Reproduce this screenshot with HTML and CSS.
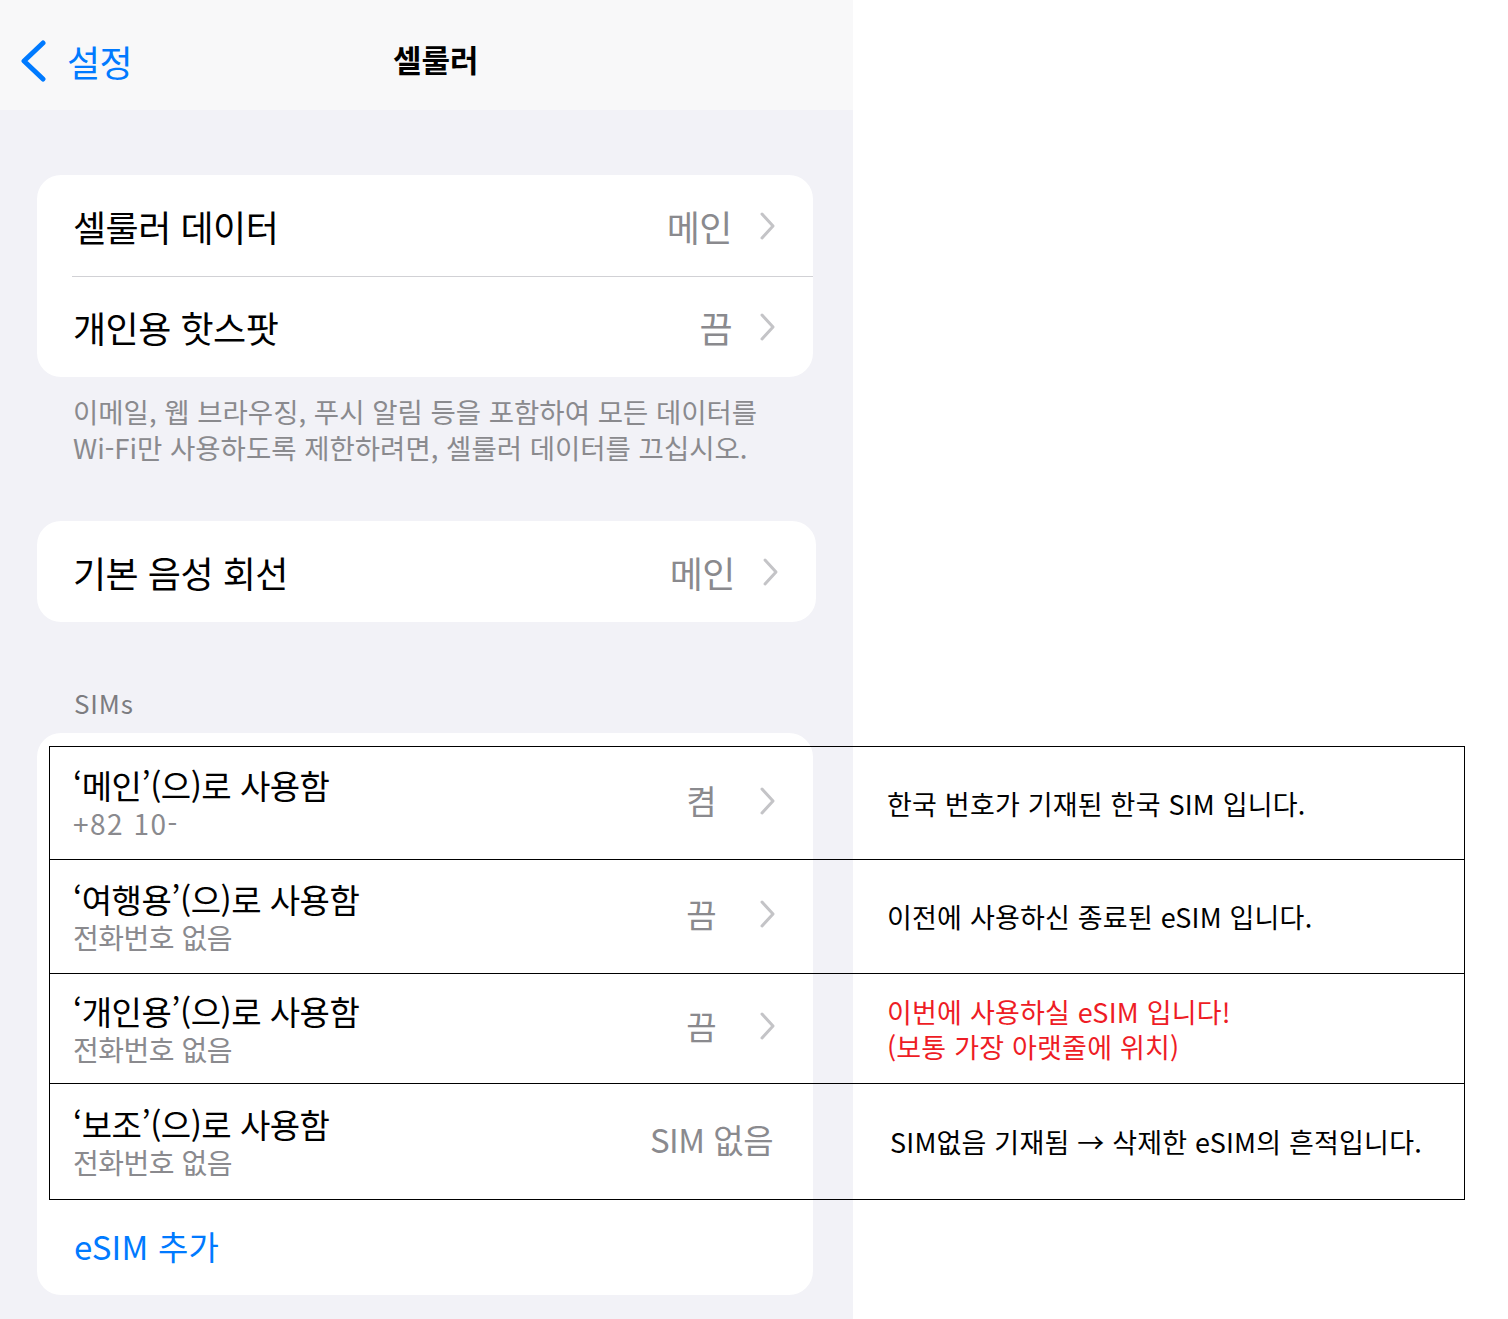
FILE: index.html
```html
<!DOCTYPE html>
<html lang="ko">
<head>
<meta charset="utf-8">
<title>셀룰러</title>
<link rel="stylesheet" href="styles.css">
</head>
<body>
<div class="page">
  <div class="screen">
    <header class="navbar">
      <div class="back">
        <svg class="back-chevron" width="28" height="42" viewBox="0 0 28 42"><path d="M24 3 L5 21 L24 39" fill="none" stroke="#007aff" stroke-width="5" stroke-linecap="round" stroke-linejoin="round"/></svg>
        <span class="back-label">설정</span>
      </div>
      <h1 class="title">셀룰러</h1>
    </header>

    <main class="content">
      <section class="card">
        <div class="row">
          <span class="label">셀룰러 데이터</span>
          <span class="value">메인</span>
          <svg class="chev" width="17" height="30" viewBox="0 0 17 30"><path d="M3 3 L14 15 L3 27" fill="none" stroke="#c4c4c7" stroke-width="3" stroke-linecap="round" stroke-linejoin="round"/></svg>
        </div>
        <div class="row">
          <span class="label">개인용 핫스팟</span>
          <span class="value">끔</span>
          <svg class="chev" width="17" height="30" viewBox="0 0 17 30"><path d="M3 3 L14 15 L3 27" fill="none" stroke="#c4c4c7" stroke-width="3" stroke-linecap="round" stroke-linejoin="round"/></svg>
        </div>
      </section>

      <p class="footnote">이메일, 웹 브라우징, 푸시 알림 등을 포함하여 모든 데이터를<br>Wi-Fi만 사용하도록 제한하려면, 셀룰러 데이터를 끄십시오.</p>

      <section class="card card-voice">
        <div class="row">
          <span class="label">기본 음성 회선</span>
          <span class="value">메인</span>
          <svg class="chev" width="17" height="30" viewBox="0 0 17 30"><path d="M3 3 L14 15 L3 27" fill="none" stroke="#c4c4c7" stroke-width="3" stroke-linecap="round" stroke-linejoin="round"/></svg>
        </div>
      </section>

      <h2 class="section-header">SIMs</h2>

      <section class="card sim-card">
        <div class="sim-row h1">
          <div class="sim-text">
            <span class="sim-title">‘메인’(으)로 사용함</span>
            <span class="sim-sub num">+82 10-</span>
          </div>
          <span class="sim-value">켬</span>
          <svg class="chev" width="17" height="30" viewBox="0 0 17 30"><path d="M3 3 L14 15 L3 27" fill="none" stroke="#c4c4c7" stroke-width="3" stroke-linecap="round" stroke-linejoin="round"/></svg>
        </div>
        <div class="sim-row h2">
          <div class="sim-text">
            <span class="sim-title">‘여행용’(으)로 사용함</span>
            <span class="sim-sub">전화번호 없음</span>
          </div>
          <span class="sim-value">끔</span>
          <svg class="chev" width="17" height="30" viewBox="0 0 17 30"><path d="M3 3 L14 15 L3 27" fill="none" stroke="#c4c4c7" stroke-width="3" stroke-linecap="round" stroke-linejoin="round"/></svg>
        </div>
        <div class="sim-row h3">
          <div class="sim-text">
            <span class="sim-title">‘개인용’(으)로 사용함</span>
            <span class="sim-sub">전화번호 없음</span>
          </div>
          <span class="sim-value">끔</span>
          <svg class="chev" width="17" height="30" viewBox="0 0 17 30"><path d="M3 3 L14 15 L3 27" fill="none" stroke="#c4c4c7" stroke-width="3" stroke-linecap="round" stroke-linejoin="round"/></svg>
        </div>
        <div class="sim-row h4">
          <div class="sim-text">
            <span class="sim-title">‘보조’(으)로 사용함</span>
            <span class="sim-sub">전화번호 없음</span>
          </div>
          <span class="sim-value no-chev">SIM 없음</span>
        </div>
        <div class="add-row">
          <span class="link">eSIM 추가</span>
        </div>
      </section>
    </main>
  </div>

  <div class="annotations">
    <div class="ann-row h1"><div class="ann-left"></div><div class="ann-note">한국 번호가 기재된 한국 SIM 입니다.</div></div>
    <div class="ann-row h2"><div class="ann-left"></div><div class="ann-note">이전에 사용하신 종료된 eSIM 입니다.</div></div>
    <div class="ann-row h3"><div class="ann-left"></div><div class="ann-note red">이번에 사용하실 eSIM 입니다!<br>(보통 가장 아랫줄에 위치)</div></div>
    <div class="ann-row h4"><div class="ann-left"></div><div class="ann-note last">SIM없음 기재됨 → 삭제한 eSIM의 흔적입니다.</div></div>
  </div>
</div>
</body>
</html>
```

FILE: styles.css
```css
* { box-sizing: border-box; }

html, body {
  margin: 0;
  padding: 0;
  background: #ffffff;
}

body {
  font-family: "Noto Sans CJK KR", "Noto Sans", sans-serif;
  color: #000;
}

.page {
  position: relative;
  width: 1508px;
  min-height: 1319px;
}

.screen {
  width: 853px;
  min-height: 1319px;
  background: #f2f2f7;
}

/* Navigation bar */
.navbar {
  height: 110px;
  background: #f8f8f9;
  display: flex;
  align-items: center;
  padding: 10px 0 0 19px;
}

.back {
  display: flex;
  align-items: center;
  gap: 20px;
  width: 374px;
  margin-top: 2px;
}

.back-chevron { display: block; }

.back-label {
  font-size: 36px;
  color: #007aff;
  letter-spacing: -0.5px;
  line-height: 1;
}

.title {
  margin: 0 0 3px 0;
  font-size: 31px;
  font-weight: 700;
  letter-spacing: 0;
  line-height: 1;
}

/* Content */
.content {
  padding: 65px 40px 0 37px;
}

.card {
  background: #ffffff;
  border-radius: 24px;
  overflow: hidden;
}

.row {
  height: 101px;
  margin-left: 35px;
  padding: 0 37px 0 1px;
  display: flex;
  align-items: center;
}

.row + .row {
  border-top: 1px solid #d1d1d5;
}

.label {
  flex: 1;
  font-size: 36px;
  letter-spacing: -0.5px;
  line-height: 1;
}

.value {
  font-size: 36px;
  color: #8a8a8e;
  letter-spacing: -0.5px;
  margin-right: 27px;
  line-height: 1;
}

.chev { display: block; flex: none; }

.footnote {
  margin: 16px 0 0 36px;
  font-size: 27.5px;
  line-height: 36px;
  color: #8a8a8e;
  letter-spacing: 0;
}

.card-voice {
  margin-top: 56px;
  margin-right: -3px;
}

.section-header {
  margin: 66px 0 0 37px;
  font-size: 26px;
  font-weight: 400;
  color: #7c7c80;
  line-height: 30px;
  letter-spacing: 0.8px;
}

.sim-card {
  margin-top: 15px;
  padding-top: 11px;
}

.sim-row {
  display: flex;
  align-items: center;
  padding: 0 37px 0 36px;
}

.h1 { height: 113px; }
.h2 { height: 114px; }
.h3 { height: 110px; }
.h4 { height: 116px; }

.sim-text {
  flex: 1;
  display: flex;
  flex-direction: column;
  padding-top: 5px;
}

.sim-title {
  font-size: 33px;
  line-height: 40px;
  letter-spacing: -0.5px;
}

.sim-sub {
  font-size: 28px;
  line-height: 36px;
  color: #8a8a8e;
  letter-spacing: -0.5px;
}

.sim-sub.num {
  letter-spacing: 1.5px;
}

.sim-value {
  font-size: 33px;
  color: #8a8a8e;
  letter-spacing: -0.5px;
  margin-right: 43px;
  line-height: 1;
}

.sim-value.no-chev {
  margin-right: 3px;
}

.add-row {
  height: 98px;
  display: flex;
  align-items: center;
  padding-left: 37px;
}

.link {
  font-size: 33px;
  color: #007aff;
  letter-spacing: 0.2px;
  line-height: 1;
}

/* Annotation overlay */
.annotations {
  position: absolute;
  left: 49px;
  top: 746px;
  width: 1416px;
  border: 1px solid #000;
  border-top: 0;
}

.ann-row {
  display: grid;
  grid-template-columns: 803px 1fr;
  border-top: 1px solid #000;
}

.ann-note {
  display: flex;
  align-items: center;
  padding-left: 34px;
  font-size: 27px;
  line-height: 35px;
  letter-spacing: 0.2px;
  color: #000;
  background: #ffffff;
}

.ann-note.red {
  color: #ee1c25;
}

.ann-note.last {
  padding-left: 37px;
}
```
